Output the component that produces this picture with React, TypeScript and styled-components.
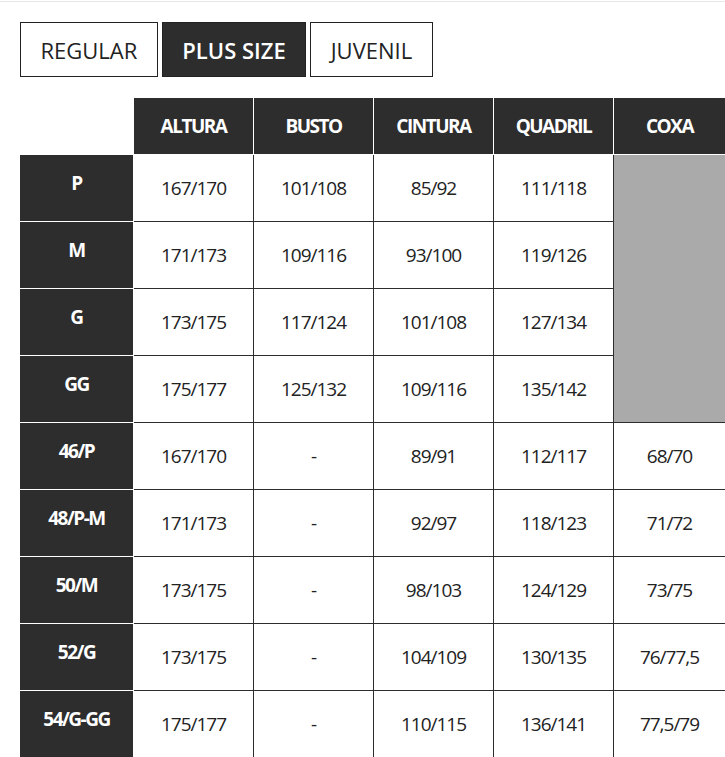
import React from "react";
import styled, { createGlobalStyle } from "styled-components";

const Global = createGlobalStyle`
  html, body {
    margin: 0;
    padding: 0;
    background: #ffffff;
    overflow: hidden;
  }
  body {
    font-family: "Open Sans", "Noto Sans", Arial, sans-serif;
    color: #222222;
  }
`;

const Page = styled.div`
  margin-top: 1px;
  border-top: 1px solid #e6e6e6;
  padding: 20px 0 0 20px;
`;

const Tabs = styled.div`
  display: flex;
  gap: 4px;
  margin-bottom: 21px;
`;

const Tab = styled.button<{ $active?: boolean }>`
  height: 55px;
  padding: 0 19.5px;
  border: 1px solid #222222;
  background: ${(p) => (p.$active ? "#2d2d2d" : "#ffffff")};
  color: ${(p) => (p.$active ? "#ffffff" : "#222222")};
  font-family: "Open Sans", Arial, sans-serif;
  font-size: 22px;
  font-weight: ${(p) => (p.$active ? 600 : 400)};
  letter-spacing: 0;
  cursor: pointer;
`;

const Table = styled.table`
  border-collapse: separate;
  border-spacing: 0;
  table-layout: fixed;
  width: 706px;
`;

const Corner = styled.th`
  width: 113px;
  height: 56px;
  padding: 0;
  border-right: 1px solid #ffffff;
  border-bottom: 1px solid #ffffff;
  background: #ffffff;
`;

const HeadCell = styled.th<{ $w: number }>`
  width: ${(p) => p.$w}px;
  height: 56px;
  padding: 0;
  background: #2d2d2d;
  color: #ffffff;
  border-right: 1px solid #ffffff;
  border-bottom: 1px solid #ffffff;
  font-size: 19px;
  font-weight: 700;
  letter-spacing: -1.5px;
  text-align: center;
  vertical-align: middle;
`;

const SizeCell = styled.th`
  height: 66px;
  padding: 0 0 10px;
  box-sizing: border-box;
  background: #2d2d2d;
  color: #ffffff;
  border-right: 1px solid #ffffff;
  border-bottom: 1px solid #ffffff;
  font-size: 19px;
  font-weight: 700;
  letter-spacing: -1.5px;
  text-align: center;
  vertical-align: middle;
`;

const Cell = styled.td`
  height: 66px;
  padding: 0;
  border-right: 1px solid #2d2d2d;
  border-bottom: 1px solid #2d2d2d;
  color: #222222;
  font-size: 19px;
  font-weight: 400;
  letter-spacing: -1px;
  text-align: center;
  vertical-align: middle;
`;

const Blank = styled.td`
  padding: 0;
  background: #aaaaaa;
  border-bottom: 1px solid #2d2d2d;
`;

const headers = ["ALTURA", "BUSTO", "CINTURA", "QUADRIL", "COXA"];

const regular: [string, string, string, string, string][] = [
  ["P", "167/170", "101/108", "85/92", "111/118"],
  ["M", "171/173", "109/116", "93/100", "119/126"],
  ["G", "173/175", "117/124", "101/108", "127/134"],
  ["GG", "175/177", "125/132", "109/116", "135/142"],
];

const plus: string[][] = [
  ["46/P", "167/170", "-", "89/91", "112/117", "68/70"],
  ["48/P-M", "171/173", "-", "92/97", "118/123", "71/72"],
  ["50/M", "173/175", "-", "98/103", "124/129", "73/75"],
  ["52/G", "173/175", "-", "104/109", "130/135", "76/77,5"],
  ["54/G-GG", "175/177", "-", "110/115", "136/141", "77,5/79"],
];

export default function App() {
  return (
    <Page>
      <Global />
      <Tabs>
        <Tab>REGULAR</Tab>
        <Tab $active>PLUS SIZE</Tab>
        <Tab>JUVENIL</Tab>
      </Tabs>
      <Table>
        <thead>
          <tr>
            <Corner />
            {headers.map((h, i) => (
              <HeadCell key={h} $w={i === headers.length - 1 ? 111 : 119}>
                {h}
              </HeadCell>
            ))}
          </tr>
        </thead>
        <tbody>
          {regular.map((row, i) => (
            <tr key={row[0]}>
              <SizeCell>{row[0]}</SizeCell>
              {row.slice(1).map((v, j) => (
                <Cell key={j}>{v}</Cell>
              ))}
              {i === 0 && <Blank rowSpan={4} />}
            </tr>
          ))}
          {plus.map((row) => (
            <tr key={row[0]}>
              <SizeCell>{row[0]}</SizeCell>
              {row.slice(1).map((v, j) => (
                <Cell key={j}>{v}</Cell>
              ))}
            </tr>
          ))}
        </tbody>
      </Table>
    </Page>
  );
}
